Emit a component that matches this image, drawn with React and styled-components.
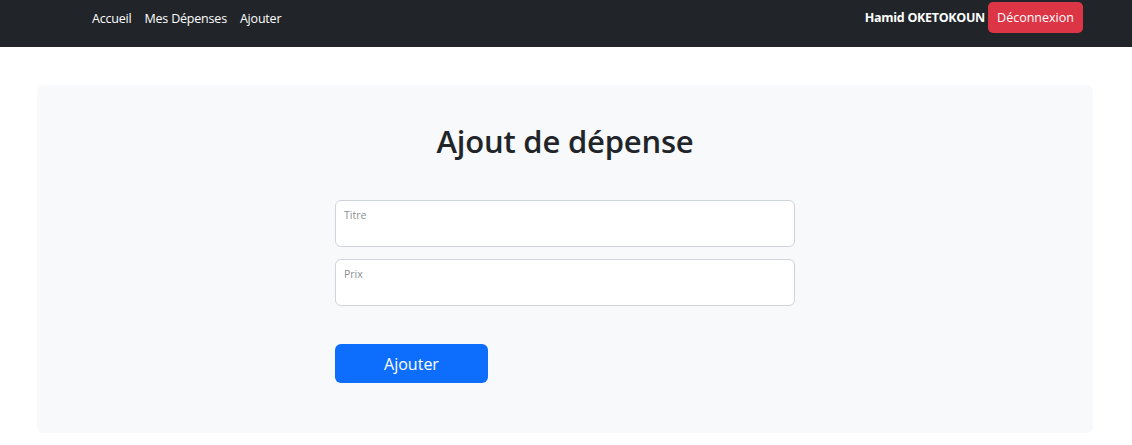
import React from 'react';
import styled, { createGlobalStyle } from 'styled-components';

const GlobalStyle = createGlobalStyle`
  body {
    margin: 0;
    background: #fff;
    font-family: "Open Sans", "Noto Sans", sans-serif;
    color: #212529;
  }
`;

// Navbar
const Navbar = styled.nav`
  height: 47px;
  background-color: #212529;
  display: flex;
  justify-content: space-between;
  align-items: flex-start;
  padding: 2px 49px 0 92px;
  box-sizing: border-box;
`;

const NavLinks = styled.div`
  display: flex;
  gap: 13px;
  height: 32px;
  align-items: center;
`;

const NavLink = styled.a`
  color: #fff;
  font-size: 12.5px;
  text-decoration: none;
  letter-spacing: -0.2px;
`;

const UserBox = styled.div`
  display: flex;
  align-items: center;
  gap: 3px;
`;

const UserName = styled.span`
  color: #fff;
  font-weight: 700;
  font-size: 12.5px;
  letter-spacing: -0.3px;
`;

const Button = styled.button`
  border: none;
  color: #fff;
  font-family: inherit;
  cursor: pointer;
  background-color: ${(p) => (p.variant === 'danger' ? '#dc3545' : '#0d6efd')};
  height: ${(p) => (p.size === 'lg' ? '39px' : '31px')};
  width: ${(p) => (p.size === 'lg' ? '153px' : '95px')};
  padding: 0;
  font-size: ${(p) => (p.size === 'lg' ? '16px' : '12.5px')};
  border-radius: ${(p) => (p.size === 'lg' ? '6px' : '5px')};
`;

// Panel
const Panel = styled.main`
  margin: 38px 39px 0 37px;
  height: 348px;
  background-color: #f8f9fa;
  border-radius: 6px;
  padding-top: 38px;
  box-sizing: border-box;
  display: flex;
  flex-direction: column;
  align-items: center;
`;

const Title = styled.h1`
  margin: 0 0 40px;
  font-size: 31px;
  font-weight: 600;
  line-height: 1.2;
  letter-spacing: -0.2px;
`;

const Form = styled.form`
  width: 460px;
  display: flex;
  flex-direction: column;
  gap: 12px;
`;

const Field = styled.label`
  display: block;
  height: 47px;
  box-sizing: border-box;
  background: #fff;
  border: 1px solid #ced4da;
  border-radius: 6px;
  padding: 7px 8px 0;
`;

const FieldLabel = styled.span`
  display: block;
  font-size: 10.5px;
  color: #8a8f94;
`;

const SubmitRow = styled.div`
  margin-top: 26px;
`;

const App = () => {
  return (
    <>
      <GlobalStyle />
      <Navbar>
        <NavLinks>
          <NavLink href="#">Accueil</NavLink>
          <NavLink href="#">Mes Dépenses</NavLink>
          <NavLink href="#">Ajouter</NavLink>
        </NavLinks>
        <UserBox>
          <UserName>Hamid OKETOKOUN</UserName>
          <Button variant="danger">Déconnexion</Button>
        </UserBox>
      </Navbar>

      <Panel>
        <Title>Ajout de dépense</Title>
        <Form onSubmit={(e) => e.preventDefault()}>
          <Field>
            <FieldLabel>Titre</FieldLabel>
          </Field>
          <Field>
            <FieldLabel>Prix</FieldLabel>
          </Field>
          <SubmitRow>
            <Button type="submit" size="lg">Ajouter</Button>
          </SubmitRow>
        </Form>
      </Panel>
    </>
  );
};

export default App;
